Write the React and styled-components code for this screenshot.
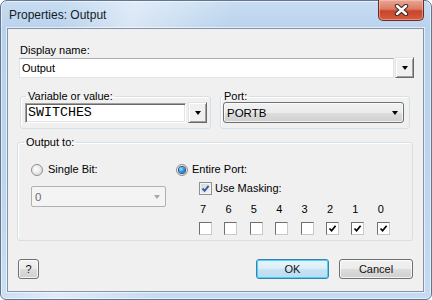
import styled, { createGlobalStyle } from "styled-components";

const GlobalStyle = createGlobalStyle`
  html, body {
    margin: 0;
    padding: 0;
    background: #ffffff;
  }
  body {
    font-family: "Liberation Sans", Arial, sans-serif;
    font-size: 11px;
    color: #000000;
  }
`;

const BITS = [
  { n: 7, on: false },
  { n: 6, on: false },
  { n: 5, on: false },
  { n: 4, on: false },
  { n: 3, on: false },
  { n: 2, on: true },
  { n: 1, on: true },
  { n: 0, on: true },
];

function Check({ color = "#000", width = 1.7 }) {
  return (
    <svg width="9" height="9" viewBox="0 0 9 9">
      <path d="M1.5 4.5 L3.6 6.8 L7.6 1.8" fill="none" stroke={color} strokeWidth={width} />
    </svg>
  );
}

function App() {
  return (
    <>
      <GlobalStyle />
      <Frame>
        <TitleBar>
          <Title>Properties: Output</Title>
          <CloseButton>
            <svg width="15" height="12" viewBox="0 0 15 12">
              <path d="M3 2 L12 10 M12 2 L3 10" stroke="#3c2622" strokeWidth="4.4" strokeLinecap="round" />
              <path d="M3 2 L12 10 M12 2 L3 10" stroke="#ffffff" strokeWidth="2.4" strokeLinecap="round" />
            </svg>
          </CloseButton>
        </TitleBar>
        <Client>
          <FieldLabel>Display name:</FieldLabel>
          <ComboRow>
            <TextBox>Output</TextBox>
            <DropButton $gap={1}>
              <Arrow />
            </DropButton>
          </ComboRow>

          <GroupRow>
            <GroupBox $width={191} $pad="0 3px 5px 4px" $ml={1}>
              <Legend $indent={1}>Variable or value:</Legend>
              <ComboRow>
                <SunkenBox>SWITCHES</SunkenBox>
                <DropButton $gap={2}>
                  <Arrow />
                </DropButton>
              </ComboRow>
            </GroupBox>
            <GroupBox $width={190} $pad="0 5px 4px 2px">
              <Legend $indent={-1}>Port:</Legend>
              <SelectBox>
                <span>PORTB</span>
                <Arrow />
              </SelectBox>
            </GroupBox>
          </GroupRow>

          <GroupBox $width={396} $pad="15px 10px 5px 13px" $ml={-2} $mt={7}>
            <Legend $indent={-7}>Output to:</Legend>
            <OutputGrid>
              <Column>
                <OptionRow $gap={5}>
                  <Radio />
                  <span>Single Bit:</span>
                </OptionRow>
                <DisabledSelect>
                  <span>0</span>
                  <Arrow $muted />
                </DisabledSelect>
              </Column>
              <Column>
                <OptionRow $gap={4}>
                  <Radio $checked />
                  <span>Entire Port:</span>
                </OptionRow>
                <MaskRow>
                  <AeroCheck>
                    <Check color="#3b5a9c" width={1.9} />
                  </AeroCheck>
                  <span>Use Masking:</span>
                </MaskRow>
                <BitGrid>
                  {BITS.map((b) => (
                    <BitLabel key={"l" + b.n}>{b.n}</BitLabel>
                  ))}
                  {BITS.map((b) => (
                    <BitBox key={"b" + b.n}>{b.on && <Check />}</BitBox>
                  ))}
                </BitGrid>
              </Column>
            </OutputGrid>
          </GroupBox>

          <ButtonRow>
            <PushButton $w={21}>?</PushButton>
            <Spacer />
            <PushButton $w={73} $primary>
              OK
            </PushButton>
            <PushButton $w={74}>Cancel</PushButton>
          </ButtonRow>
        </Client>
      </Frame>
    </>
  );
}

export default App;

const Frame = styled.div`
  width: 432px;
  height: 300px;
  box-sizing: border-box;
  display: flex;
  flex-direction: column;
  padding: 0 7px 7px 6px;
  border: 1px solid #62778f;
  border-radius: 7px 7px 6px 6px;
  background:
    linear-gradient(105deg, rgba(255, 255, 255, 0) 60px, rgba(255, 255, 255, 0.45) 130px, rgba(255, 255, 255, 0) 230px),
    linear-gradient(180deg, #c8ddf2 0, #b9d2ec 28px, #bdd5ee 60%, #c6dbf0 100%);
  box-shadow: inset 0 0 0 1px rgba(255, 255, 255, 0.55);
`;

const TitleBar = styled.div`
  height: 28px;
  display: flex;
  align-items: flex-start;
  justify-content: space-between;
`;

const Title = styled.div`
  padding: 7px 0 0 2px;
  font-size: 12px;
  line-height: 14px;
  color: #141c26;
`;

const CloseButton = styled.div`
  width: 46px;
  height: 21px;
  margin-top: -1px;
  box-sizing: border-box;
  display: flex;
  align-items: center;
  justify-content: center;
  border: 1px solid #6a2c22;
  border-top: none;
  border-radius: 0 0 5px 5px;
  background: linear-gradient(180deg, #e9a797 0, #dc7b64 45%, #c8452b 55%, #d45d3f 100%);
  box-shadow: inset 0 0 0 1px rgba(255, 210, 200, 0.45);
`;

const Client = styled.div`
  flex: 1;
  display: flex;
  flex-direction: column;
  padding: 15px 9px 12px 11px;
  background: #f0f0f0;
  border: 1px solid #8493a8;
  box-shadow: 0 0 0 1px rgba(255, 255, 255, 0.6);
`;

const FieldLabel = styled.div`
  line-height: 13px;
  height: 13px;
  padding-left: 1px;
`;

const ComboRow = styled.div`
  display: flex;
  align-items: center;
  height: 21px;
`;

const TextBox = styled.div`
  flex: 1;
  height: 20px;
  box-sizing: border-box;
  display: flex;
  align-items: center;
  padding-left: 2px;
  background: #ffffff;
  border: 1px solid #e1e5ea;
  border-top-color: #abadb3;
`;

const SunkenBox = styled.div`
  flex: 1;
  height: 20px;
  box-sizing: border-box;
  display: flex;
  align-items: center;
  padding-left: 2px;
  background: #ffffff;
  font-family: "Liberation Mono", "Courier New", monospace;
  font-size: 13.3px;
  border: 1px solid;
  border-color: #a0a0a0 #ffffff #ffffff #a0a0a0;
  box-shadow: inset 1px 1px 0 #696969, inset -1px -1px 0 #e3e3e3;
`;

const DropButton = styled.div`
  width: 19px;
  height: 21px;
  margin-left: ${(p) => p.$gap || 0}px;
  box-sizing: border-box;
  display: flex;
  align-items: center;
  justify-content: center;
  background: #f0f0f0;
  border: 1px solid;
  border-color: #e3e3e3 #696969 #696969 #e3e3e3;
  box-shadow: inset 1px 1px 0 #ffffff, inset -1px -1px 0 #a0a0a0;
`;

const Arrow = styled.span`
  width: 0;
  height: 0;
  border-left: 3.5px solid transparent;
  border-right: 3.5px solid transparent;
  border-top: 4px solid ${(p) => (p.$muted ? "#a7a7a7" : "#000000")};
`;

const GroupRow = styled.div`
  display: flex;
  gap: 9px;
  margin-top: 12px;
`;

const GroupBox = styled.fieldset`
  width: ${(p) => p.$width}px;
  box-sizing: border-box;
  margin: ${(p) => p.$mt || 0}px 0 0 ${(p) => p.$ml || 0}px;
  padding: ${(p) => p.$pad};
  border: 1px solid #d5dfe5;
  border-radius: 3px;
  box-shadow: inset 1px 1px 0 #ffffff;
  min-width: 0;
`;

const Legend = styled.legend`
  padding: 0 2px;
  margin-left: ${(p) => p.$indent}px;
  line-height: 12px;
  font-size: 11px;
`;

const SelectBox = styled.div`
  height: 21px;
  box-sizing: border-box;
  display: flex;
  align-items: center;
  justify-content: space-between;
  padding: 0 5px 0 3px;
  border: 1px solid #707070;
  border-radius: 3px;
  background: linear-gradient(180deg, #f2f2f2 0, #ebebeb 50%, #dddddd 51%, #cfcfcf 100%);
  box-shadow: inset 0 0 0 1px rgba(255, 255, 255, 0.7);
  font-size: 11.5px;
`;

const OutputGrid = styled.div`
  display: grid;
  grid-template-columns: 135px 1fr;
  column-gap: 10px;
`;

const Column = styled.div`
  display: flex;
  flex-direction: column;
`;

const OptionRow = styled.div`
  display: flex;
  align-items: center;
  gap: ${(p) => p.$gap}px;
  height: 13px;
  line-height: 13px;
`;

const Radio = styled.span`
  width: 12px;
  height: 12px;
  box-sizing: border-box;
  border-radius: 50%;
  border: 1px solid #8f8f8f;
  background: radial-gradient(circle at 40% 40%, #ffffff 0, #e9e9e9 50%, #cfcfcf 100%);
  display: flex;
  align-items: center;
  justify-content: center;
  &::after {
    content: "";
    display: ${(p) => (p.$checked ? "block" : "none")};
    width: 6px;
    height: 6px;
    border-radius: 50%;
    background: radial-gradient(circle at 35% 35%, #9fdcff 0, #2d8ad0 55%, #0d4f86 100%);
    box-shadow: 0 0 0 1px #1a5a8c;
  }
`;

const DisabledSelect = styled.div`
  margin-top: 10px;
  height: 21px;
  box-sizing: border-box;
  display: flex;
  align-items: center;
  justify-content: space-between;
  padding: 0 5px 0 3px;
  border: 1px solid #adb2b5;
  border-radius: 2px;
  background: #f4f4f4;
  color: #6d6d6d;
  font-size: 11.5px;
`;

const MaskRow = styled.div`
  display: flex;
  align-items: center;
  gap: 3px;
  margin: 6px 0 0 23px;
  height: 13px;
  line-height: 13px;
`;

const AeroCheck = styled.span`
  width: 13px;
  height: 13px;
  box-sizing: border-box;
  border: 1px solid #8f8f8f;
  background: linear-gradient(135deg, #cfd6e0 0, #f4f6f9 100%);
  box-shadow: inset 0 0 0 1px #f4f4f4;
  display: flex;
  align-items: center;
  justify-content: center;
`;

const BitGrid = styled.div`
  display: grid;
  grid-template-columns: repeat(8, 25.4px);
  row-gap: 6px;
  margin: 8px 0 0 23px;
`;

const BitLabel = styled.span`
  padding-left: 1px;
  line-height: 13px;
`;

const BitBox = styled.span`
  width: 13px;
  height: 13px;
  box-sizing: border-box;
  background: #ffffff;
  border: 1px solid;
  border-color: #6f6f6f #c8c8c8 #c8c8c8 #6f6f6f;
  display: flex;
  align-items: center;
  justify-content: center;
`;

const ButtonRow = styled.div`
  display: flex;
  align-items: center;
  gap: 10px;
  margin: 18px 1px 0 -1px;
`;

const Spacer = styled.div`
  flex: 1;
`;

const PushButton = styled.div`
  width: ${(p) => p.$w}px;
  height: 20px;
  box-sizing: border-box;
  display: flex;
  align-items: center;
  justify-content: center;
  border: 1px solid ${(p) => (p.$primary ? "#3c7fb1" : "#707070")};
  border-radius: 3px;
  background: ${(p) =>
    p.$primary
      ? "linear-gradient(180deg, #e8f4fb 0, #dcedf8 50%, #c7e3f5 51%, #bcdaef 100%)"
      : "linear-gradient(180deg, #f2f2f2 0, #ebebeb 50%, #dddddd 51%, #cfcfcf 100%)"};
  box-shadow: ${(p) =>
    p.$primary ? "inset 0 0 0 1px #48d4f9" : "inset 0 0 0 1px rgba(255, 255, 255, 0.75)"};
  color: #111;
`;
